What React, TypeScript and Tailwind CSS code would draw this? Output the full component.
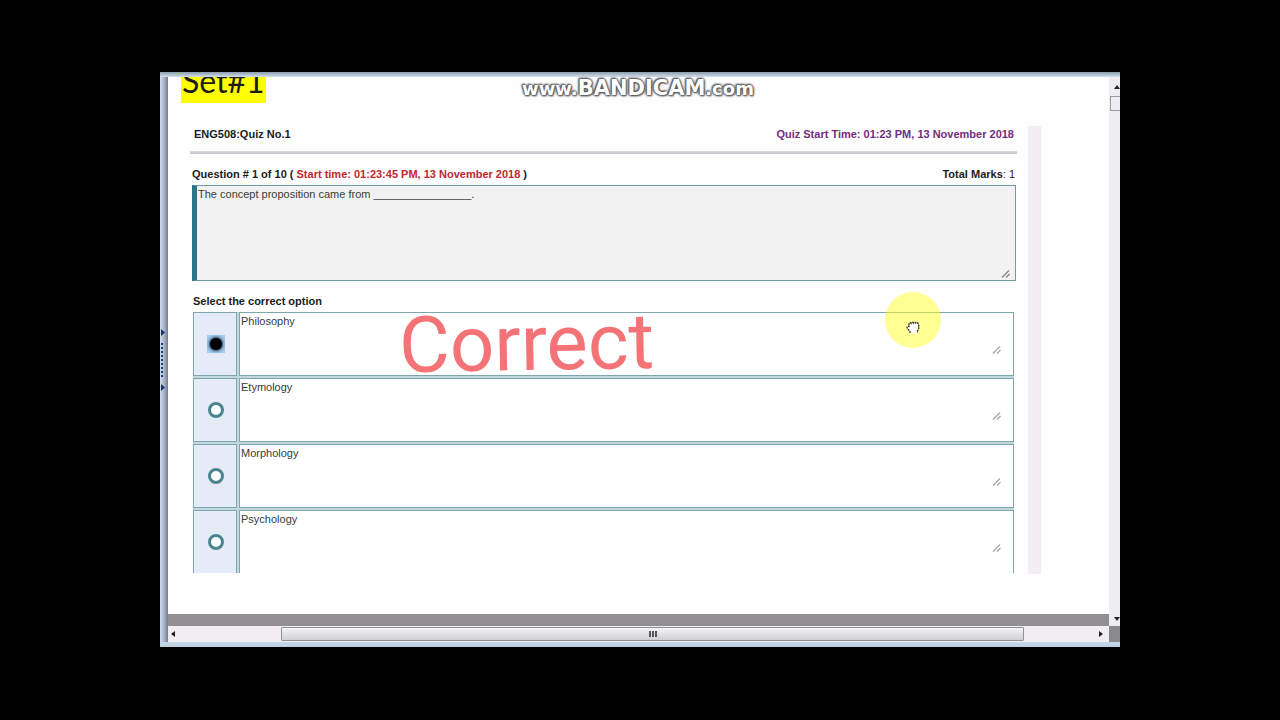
import React, { useState } from 'react';

const options = ['Philosophy', 'Etymology', 'Morphology', 'Psychology'];

const Grip: React.FC<{ className?: string }> = ({ className = '' }) => (
  <svg aria-hidden="true" viewBox="0 0 9 9" className={`h-[9px] w-[9px] shrink-0 ${className}`}>
    <path d="M1 8.5 8 1.5M5 8.5 8.5 5" stroke="currentColor" strokeWidth="1.3" fill="none" />
  </svg>
);

const Arrow: React.FC<{ d: string }> = ({ d }) => (
  <svg aria-hidden="true" viewBox="0 0 6 6" className="h-[6px] w-[6px]">
    <path d={d} fill="#222222" />
  </svg>
);

const Splitter = () => (
  <div className="flex w-2 shrink-0 flex-col items-start justify-center bg-linear-to-r from-[#cfdcec] via-[#a9b6ca] to-[#747990]">
    <svg aria-hidden="true" viewBox="0 0 5 62" className="h-[62px] w-[5px]">
      <path d="M1 0 5 3.500 1 7ZM1 55 5 58.500 1 62Z" fill="#1b2f6b" />
      <path d="M2 14V48" stroke="#1b3f7f" strokeWidth="2" strokeDasharray="2 2" />
    </svg>
  </div>
);

const VerticalBar = () => (
  <div className="flex w-[11px] shrink-0 flex-col items-end bg-[#eeedf1]">
    <div className="flex h-[19px] items-center">
      <Arrow d="M0 5 3 1 6 5Z" />
    </div>
    <div className="h-[15px] w-[10px] border border-r-0 border-[#9a9a9e] bg-[#ededf0]" />
    <div className="mt-auto flex h-[14px] items-center">
      <Arrow d="M0 1 3 5 6 1Z" />
    </div>
  </div>
);

const HorizontalBar = () => (
  <div className="flex h-4 min-w-0 flex-1 items-center bg-[#f0eef1]">
    <div className="flex w-[12%] items-center pl-[2px]">
      <Arrow d="M5 0 1 3 5 6Z" />
    </div>
    <div className="flex h-[14px] w-[79%] items-center justify-center gap-[1px] rounded-[1px] border border-[#929296] bg-linear-to-b from-[#f5f5f6] to-[#cfcfd3]">
      <span className="h-[6px] w-[2px] bg-[#555555]" />
      <span className="h-[6px] w-[2px] bg-[#555555]" />
      <span className="h-[6px] w-[2px] bg-[#555555]" />
    </div>
    <div className="flex flex-1 justify-end pr-[5px]">
      <Arrow d="M1 0 5 3 1 6Z" />
    </div>
  </div>
);

const Watermark = () => (
  <div className="pointer-events-none absolute inset-x-0 top-1 flex items-baseline justify-center pr-1 font-['DejaVu_Sans',sans-serif] text-[18px] leading-6 font-bold text-white [text-shadow:0_0_2px_#555,0_0_2px_#555,1px_1px_2px_#555,-1px_-1px_2px_#555,0_0_3px_#777]">
    <span>www.</span>
    <span className="text-[21px]">BANDICAM</span>
    <span>.com</span>
  </div>
);

const Pointer = () => (
  <div className="pointer-events-none absolute -top-[20px] right-[73px] flex h-14 w-14 items-center justify-center rounded-full bg-[#ffff28]/50">
    <svg aria-hidden="true" viewBox="0 0 14 13" className="mt-[14px] h-[13px] w-[14px]">
      <path
        d="M4 12.500V10.500L1.500 7.500C.5 6 1.500 4.500 3 5.500V3C3 1.500 4.500 1.200 5 2.200 5.300 1 7 .8 7.400 2 8 .9 9.600 1 10 2.300 11 1.500 12.800 2 12.700 4V7.500L11.500 10V12.500Z"
        fill="#fff"
      />
      <path
        d="M4 12V10.500L1.500 7.500C.5 6 1.500 4.500 3 5.500V3C3 1.500 4.500 1.200 5 2.200 5.300 1 7 .8 7.400 2 8 .9 9.600 1 10 2.300 11 1.500 12.800 2 12.700 4V7.500L11.500 10V12"
        fill="none"
        stroke="#222"
        strokeWidth="1.200"
        strokeDasharray="2 .7"
      />
    </svg>
  </div>
);

const Quiz = () => {
  const [selected, setSelected] = useState(options[0]);

  return (
    <form className="min-w-0 flex-1 pb-px font-['Liberation_Sans',Arial,sans-serif] text-[11px] leading-4 text-[#1c1c1c]">
      <div className="flex justify-between pr-[3px] pl-1 font-bold">
        <h2>ENG508:Quiz No.1</h2>
        <p className="text-[#742c80]">Quiz Start Time: 01:23 PM, 13 November 2018</p>
      </div>
      <div className="mt-[9px] h-[3px] bg-linear-to-b from-[#dddae0] to-[#c4c1c8]" />

      <div className="mt-3 flex justify-between pr-[2px] pl-[2px]">
        <label htmlFor="question" className="font-bold">
          Question # 1 of 10 ( <span className="text-[#c4252f]">Start time: 01:23:45 PM, 13 November 2018</span> )
        </label>
        <p>
          <b>Total Marks</b>: 1
        </p>
      </div>
      <div className="mt-[3px] mr-[1px] ml-[2px] flex h-24 items-end border border-l-[5px] border-[#6f9ba4] border-l-[#2b7389] bg-[#f2f2f2] pr-[5px] pb-[2px]">
        <textarea
          id="question"
          readOnly
          className="h-full min-w-0 flex-1 resize-none pl-[1px] text-[#3a3a3a] outline-none"
          defaultValue="The concept proposition came from ________________."
        />
        <Grip className="text-[#888888]" />
      </div>

      <fieldset className="relative mr-[3px] ml-[3px]">
        <legend className="pt-3 font-bold">Select the correct option</legend>
        <div className="mt-[3px] flex h-[261px] flex-col gap-[2px] overflow-hidden bg-[#c3d8dc]">
          {options.map((option) => (
            <div key={option} className="flex h-16 shrink-0 gap-[2px]">
              <div className="flex w-11 shrink-0 items-center justify-center border border-[#7ea6ad] bg-[#e5ecf8] pl-[2px]">
                <div className={`flex h-[18px] w-[18px] items-center justify-center ${selected === option ? 'bg-[#a3cbed]' : ''}`}>
                  <input
                    type="radio"
                    name="answer"
                    aria-label={option}
                    checked={selected === option}
                    onChange={() => setSelected(option)}
                    className="h-4 w-4 appearance-none rounded-full border-[3px] border-[#4a858f] bg-white checked:h-3 checked:w-3 checked:border-0 checked:bg-black checked:shadow-[0_0_3px_1px_#16304d]"
                  />
                </div>
              </div>
              <div className="flex min-w-0 flex-1 items-end border border-[#7ea6ad] bg-white pr-[12px]">
                <textarea
                  readOnly
                  aria-label={`${option} text`}
                  defaultValue={option}
                  className="h-full min-w-0 flex-1 resize-none pl-[1px] text-[#3a3a3a] outline-none"
                />
                <Grip className="mb-[21px] text-[#a5a5a5]" />
              </div>
            </div>
          ))}
        </div>
        <div className="pointer-events-none absolute inset-x-0 top-[3px]">
          <p className="absolute -top-[7px] left-[206px] -rotate-1 font-['Roboto',sans-serif] text-[78px] leading-[78px] text-[#f47377]">
            Correct
          </p>
          <Pointer />
        </div>
      </fieldset>
    </form>
  );
};

const App: React.FC = () => (
  <main className="flex min-h-screen flex-col items-center bg-black py-[72px]">
    <div className="relative w-3/4 bg-[#c9d9ea]">
      <div className="h-[5px] bg-linear-to-b from-[#8b9cac] to-[#d3e0ee]" />
      <div className="flex">
        <Splitter />
        <div className="min-w-0 flex-1">
          <div className="flex">
            <div className="min-w-0 flex-1">
              <div className="bg-[#fefefe] pb-10">
                <div className="flex h-[26px] items-end overflow-hidden pl-[13px]">
                  <h1 className="bg-[#ffff00] px-[1px] font-['Lato',sans-serif] text-[32px] leading-11 text-[#1c1c1c]">Set#1</h1>
                </div>
                <div className="mt-[23px] flex pr-[68px] pl-[22px]">
                  <Quiz />
                  <div className="ml-[11px] w-[13px] shrink-0 bg-[#f1eff3]" />
                </div>
              </div>
              <div className="h-3 bg-[#918f92]" />
            </div>
            <VerticalBar />
          </div>
          <div className="flex">
            <HorizontalBar />
            <div className="w-[11px] bg-[#89888c]" />
          </div>
        </div>
      </div>
      <div className="h-[5px] bg-linear-to-b from-[#c5d6ea] to-[#bcd0df]" />
      <Watermark />
    </div>
  </main>
);

export default App;
